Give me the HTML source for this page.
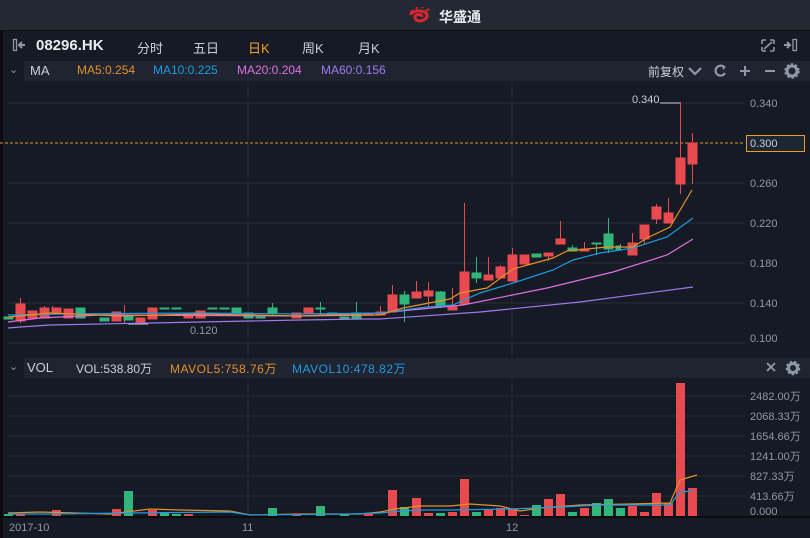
<!DOCTYPE html>
<html><head><meta charset="utf-8"><style>
*{margin:0;padding:0;box-sizing:border-box}
body{width:810px;height:538px;overflow:hidden;background:#161a24;font-family:"Liberation Sans","Noto Sans CJK SC",sans-serif;position:relative;color:#c8d0dc}
.abs{position:absolute}
.t{position:absolute;white-space:nowrap;font-size:12px}
</style></head><body>
<div class="abs" style="left:0;top:0;width:810px;height:31px;background:#232833;border-bottom:1px solid #0e1016"></div>
<svg class="abs" style="left:408px;top:7px" width="22" height="18" viewBox="0 0 22 18"><path d="M3 8 C3 3 18 2 19 8 C20 14 8 16 7 11 C6 7 14 6 14 10" fill="none" stroke="#d9272e" stroke-width="3"/><path d="M2 6 L5 3 M8 2 L9 0 M14 1 L15 -1 M18 4 L21 2" stroke="#d9272e" stroke-width="2"/></svg>
<div class="t" style="left:439px;top:7px;font-size:14px;color:#e8ecf2;font-weight:bold">华盛通</div>
<div class="abs" style="left:0;top:31px;width:3px;height:507px;background:#0a0c10"></div>
<!-- toolbar -->
<svg class="abs" style="left:12px;top:38px" width="16" height="14"><rect x="1.5" y="1.5" width="3" height="11" fill="none" stroke="#8e98a8" stroke-width="1.3"/><path d="M7 7 H13 M10 4 L7 7 L10 10" stroke="#8e98a8" stroke-width="2" fill="none"/></svg>
<div class="t" style="left:36px;top:37px;font-size:15px;font-weight:bold;color:#e8ecf2">08296.HK</div>
<div class="t" style="left:137px;top:38px;font-size:13px;color:#c8d0dc">分时</div>
<div class="t" style="left:193px;top:38px;font-size:13px;color:#c8d0dc">五日</div>
<div class="t" style="left:248px;top:38px;font-size:13px;color:#f0a030">日K</div>
<div class="t" style="left:302px;top:38px;font-size:13px;color:#c8d0dc">周K</div>
<div class="t" style="left:358px;top:38px;font-size:13px;color:#c8d0dc">月K</div>
<svg class="abs" style="left:761px;top:39px" width="14" height="13"><path d="M1 1 H5 M1 1 V5 M13 1 H9 M13 1 V5 M1 12 H5 M1 12 V8 M13 12 H9 M13 12 V8 M3 10 L11 3" stroke="#8e98a8" stroke-width="1.6" fill="none"/></svg>
<svg class="abs" style="left:783px;top:38px" width="16" height="14"><path d="M1 7 H7 M4 4 L7 7 L4 10" stroke="#8e98a8" stroke-width="2" fill="none"/><rect x="10" y="1.5" width="3.5" height="11" fill="none" stroke="#8e98a8" stroke-width="1.3"/></svg>
<!-- MA bar -->
<div class="abs" style="left:3px;top:61px;width:807px;height:20px;background:#161a24"></div>
<div class="abs" style="left:24px;top:61px;width:786px;height:20px;background:#1f2430"></div>
<div class="t" style="left:9px;top:63px;color:#8e98a8;font-size:11px">⌄</div>
<div class="t" style="left:30px;top:63px;color:#c8d0dc;font-size:13px">MA</div>
<div class="t" style="left:77px;top:63px;color:#e5902a;font-size:12px">MA5:0.254</div>
<div class="t" style="left:153px;top:63px;color:#1e9be0;font-size:12px">MA10:0.225</div>
<div class="t" style="left:237px;top:63px;color:#e070e0;font-size:12px">MA20:0.204</div>
<div class="t" style="left:321px;top:63px;color:#9b7cf0;font-size:12px">MA60:0.156</div>
<div class="t" style="left:648px;top:63px;color:#c8d0dc;font-size:12px">前复权</div>
<svg class="abs" style="left:686px;top:62px" width="120" height="18"><path d="M3 6 L9 12 L15 6" stroke="#8e98a8" stroke-width="2.2" fill="none"/><path d="M38 5 A5 5 0 1 0 39 11" stroke="#8e98a8" stroke-width="2.2" fill="none"/><path d="M36 3 L40 5 L37 8" fill="#8e98a8"/><path d="M54 9 H64 M59 4 V14" stroke="#8e98a8" stroke-width="2"/><path d="M79 9 H89" stroke="#8e98a8" stroke-width="2"/><circle cx="106" cy="9" r="5" fill="none" stroke="#8e98a8" stroke-width="3"/><circle cx="106" cy="9" r="7" fill="none" stroke="#8e98a8" stroke-width="1.5" stroke-dasharray="2.5 2"/></svg>
<!-- main chart -->
<svg class="abs" style="left:0;top:81px" width="810" height="277" viewBox="0 81 810 277">
<g stroke="#262c38" stroke-width="1">
<path d="M8 103H745M8 183H745M8 223H745M8 263H745M8 303H745M8 343H745M248 81V357M512 81V357"/>
</g>
<path d="M0 143H745" stroke="#d8952a" stroke-dasharray="3 2" stroke-width="1"/>
<g fill="#8e98a8" font-size="11" font-family="Liberation Sans,sans-serif">
<text x="750" y="107">0.340</text><text x="750" y="187">0.260</text><text x="750" y="227">0.220</text><text x="750" y="267">0.180</text><text x="750" y="307">0.140</text><text x="750" y="342">0.100</text>
</g>
<rect x="746.5" y="135.5" width="58" height="16" fill="#1f2633" stroke="#e8a020"/>
<text x="750" y="147" fill="#c8d0dc" font-size="11" font-family="Liberation Sans,sans-serif">0.300</text>
<text x="632" y="103" fill="#c8d0dc" font-size="11" font-family="Liberation Sans,sans-serif">0.340</text>
<path d="M660 103H680" stroke="#c8d0dc"/>
<path d="M128 324H148" stroke="#c8d0dc"/>
<text x="190" y="334" fill="#8e98a8" font-size="11" font-family="Liberation Sans,sans-serif">0.120</text>
<!-- candles red -->
<g fill="#e84a50" stroke="#e84a50">
<path d="M20.5 298V323M124.5 305V324M44.5 306V318M52.5 306V314" stroke-width="1"/>
<rect x="16" y="304" width="9" height="17"/><rect x="28" y="311" width="9" height="7"/><rect x="40" y="308" width="9" height="10"/><rect x="52" y="308" width="9" height="5"/><rect x="64" y="309" width="9" height="9"/><rect x="112" y="312" width="9" height="9"/><rect x="136" y="318" width="9" height="4"/><rect x="148" y="308" width="9" height="11"/><rect x="184" y="316" width="9" height="2"/><rect x="196" y="311" width="9" height="7"/><rect x="292" y="313" width="9" height="5"/><rect x="304" y="308" width="9" height="5"/><rect x="364" y="313" width="9" height="2"/>
<rect x="376" y="312" width="9" height="3"/>
<path d="M392.5 285V312M416.5 281V298M428.5 282V307M452.5 288V310M464.5 203V304M488.5 257V280M500.5 265V278M512.5 248V281M548.5 253V261M560.5 221V244M584.5 242V251M632.5 233V255M644.5 225V244M656.5 204V224M668.5 198V223M680.5 102V194M692.5 133V184M380.5 306V315" stroke-width="1"/>
<rect x="388" y="295" width="9" height="17"/><rect x="412" y="292" width="9" height="6"/><rect x="424" y="291" width="9" height="5"/><rect x="448" y="307" width="9" height="3"/><rect x="460" y="272" width="9" height="32"/><rect x="484" y="275" width="9" height="5"/><rect x="496" y="267" width="9" height="11"/><rect x="508" y="255" width="9" height="26"/><rect x="520" y="255" width="9" height="9"/><rect x="544" y="253" width="9" height="3"/><rect x="556" y="239" width="9" height="5"/><rect x="580" y="249" width="9" height="2"/><rect x="628" y="243" width="9" height="12"/><rect x="640" y="225" width="9" height="14"/><rect x="652" y="207" width="9" height="12"/><rect x="664" y="213" width="9" height="10"/><rect x="676" y="158" width="9" height="26"/><rect x="688" y="143" width="9" height="21"/>
</g>
<g fill="#30b67a" stroke="#30b67a">
<path d="M404.5 291V322M440.5 291V308M476.5 257V283M572.5 245V251M596.5 243V255M608.5 218V253M620.5 244V251M272.5 303V316M320.5 302V315M356.5 302V318" stroke-width="1"/>
<rect x="4" y="317" width="9" height="2"/><rect x="76" y="308" width="9" height="10"/><rect x="100" y="318" width="9" height="3"/><rect x="124" y="316" width="9" height="4"/><rect x="160" y="308" width="9" height="1"/><rect x="172" y="308" width="9" height="1"/><rect x="208" y="308" width="9" height="1"/><rect x="220" y="308" width="9" height="1"/><rect x="232" y="308" width="9" height="5"/><rect x="244" y="313" width="9" height="5"/><rect x="256" y="317" width="9" height="1"/><rect x="268" y="308" width="9" height="5"/><rect x="316" y="308" width="9" height="1"/><rect x="328" y="313" width="9" height="1"/><rect x="340" y="317" width="9" height="2"/><rect x="352" y="313" width="9" height="5"/>
<rect x="400" y="295" width="9" height="9"/><rect x="436" y="292" width="9" height="15"/><rect x="472" y="273" width="9" height="5"/><rect x="532" y="254" width="9" height="3"/><rect x="568" y="248" width="9" height="3"/><rect x="592" y="243" width="9" height="1"/><rect x="604" y="234" width="9" height="15"/><rect x="616" y="246" width="4" height="4"/>
</g>
<g fill="none" stroke-width="1.2">
<polyline stroke="#9b7cf0" points="8,328 20,327 50,325 150,323 250,321 300,320 365,319 380,319 480,312 580,302 693,287"/>
<polyline stroke="#e070e0" points="8,322 40,318 100,315 300,316 380,313 463,305 547,288 613,272 667,255 693,239"/>
<polyline stroke="#1e9be0" points="8,315 60,314 200,313 300,314 380,313 427,307 453,305 480,293 513,283 553,270 573,260 600,253 633,248 667,237 693,218"/>
<polyline stroke="#e5902a" points="8,317 50,313 120,316 200,314 300,316 380,315 403,308 450,299 460,293 487,288 513,269 553,258 567,251 607,247 633,247 647,238 670,227 692,190"/>
</g>
</svg>
<!-- VOL bar -->
<div class="abs" style="left:24px;top:358px;width:786px;height:20px;background:#1f2430"></div>
<div class="t" style="left:9px;top:360px;color:#8e98a8;font-size:11px">⌄</div>
<div class="t" style="left:27px;top:360px;color:#c8d0dc;font-size:13px">VOL</div>
<div class="t" style="left:76px;top:360px;color:#c8d0dc;font-size:12px">VOL:538.80万</div>
<div class="t" style="left:170px;top:360px;color:#e5902a;font-size:12px;letter-spacing:0.5px">MAVOL5:758.76万</div>
<div class="t" style="left:292px;top:360px;color:#1e9be0;font-size:12px;letter-spacing:0.5px">MAVOL10:478.82万</div>
<svg class="abs" style="left:764px;top:360px" width="40" height="16"><path d="M3 3 L11 11 M11 3 L3 11" stroke="#8e98a8" stroke-width="1.8"/><circle cx="29" cy="8" r="4.5" fill="none" stroke="#8e98a8" stroke-width="3"/><circle cx="29" cy="8" r="6.5" fill="none" stroke="#8e98a8" stroke-width="1.5" stroke-dasharray="2.5 2"/></svg>
<svg class="abs" style="left:0;top:378px" width="810" height="160" viewBox="0 378 810 160">
<g stroke="#262c38"><path d="M8 396H745M8 416H745M8 436H745M8 456H745M8 476H745M8 496H745M248 378V516M512 378V516"/></g>
<g fill="#8e98a8" font-size="11" font-family="Liberation Sans,sans-serif">
<text x="750" y="400">2482.00万</text><text x="750" y="420">2068.33万</text><text x="750" y="440">1654.66万</text><text x="750" y="460">1241.00万</text><text x="750" y="480">827.33万</text><text x="750" y="500">413.66万</text><text x="750" y="515">0.000</text>
</g>
<g fill="#e84a50">
<rect x="16" y="514" width="9" height="2"/><rect x="52" y="510" width="9" height="6"/><rect x="112" y="509" width="9" height="7"/><rect x="148" y="510" width="9" height="6"/><rect x="184" y="514" width="9" height="2"/><rect x="292" y="514" width="9" height="2"/><rect x="364" y="514" width="9" height="2"/>
<rect x="388" y="490" width="9" height="26"/><rect x="412" y="498" width="9" height="18"/><rect x="424" y="513" width="9" height="3"/><rect x="448" y="512" width="9" height="4"/><rect x="460" y="479" width="9" height="37"/><rect x="484" y="510" width="9" height="6"/><rect x="496" y="508" width="9" height="8"/><rect x="508" y="509" width="9" height="7"/><rect x="520" y="515" width="9" height="1"/><rect x="544" y="499" width="9" height="17"/><rect x="556" y="494" width="9" height="22"/><rect x="580" y="508" width="9" height="8"/><rect x="628" y="506" width="9" height="10"/><rect x="640" y="512" width="9" height="4"/><rect x="652" y="493" width="9" height="23"/><rect x="664" y="503" width="9" height="13"/><rect x="676" y="383" width="9" height="133"/><rect x="688" y="488" width="9" height="28"/>
</g>
<g fill="#30b67a">
<rect x="4" y="514" width="9" height="2"/><rect x="124" y="491" width="9" height="25"/><rect x="160" y="512" width="9" height="4"/><rect x="172" y="514" width="9" height="2"/><rect x="268" y="508" width="9" height="8"/><rect x="316" y="506" width="9" height="10"/><rect x="340" y="514" width="9" height="2"/>
<rect x="400" y="507" width="9" height="9"/><rect x="436" y="513" width="9" height="3"/><rect x="472" y="512" width="9" height="4"/><rect x="532" y="505" width="9" height="11"/><rect x="568" y="512" width="9" height="4"/><rect x="592" y="503" width="9" height="13"/><rect x="604" y="499" width="9" height="17"/><rect x="616" y="508" width="9" height="8"/>
</g>
<g fill="none" stroke-width="1.2">
<polyline stroke="#e5902a" points="8,513 40,512 110,514 150,509 180,510 230,511 250,515 300,514 360,514 380,512 395,509 420,506 450,506 470,504 500,506 520,511 540,508 580,505 630,504 670,503 680,480 697,475"/>
<polyline stroke="#1e9be0" points="8,514 50,514 130,513 230,512 250,515 350,514 380,513 400,511 420,510 450,510 510,509 560,507 600,505 670,505 680,492 693,491"/>
</g>
<rect x="3" y="516" width="807" height="2" fill="#0a0c10"/>
<g fill="#8e98a8" font-size="11" font-family="Liberation Sans,sans-serif"><text x="9" y="531">2017-10</text><text x="242" y="531">11</text><text x="506" y="531">12</text></g>
</svg>
</body></html>
